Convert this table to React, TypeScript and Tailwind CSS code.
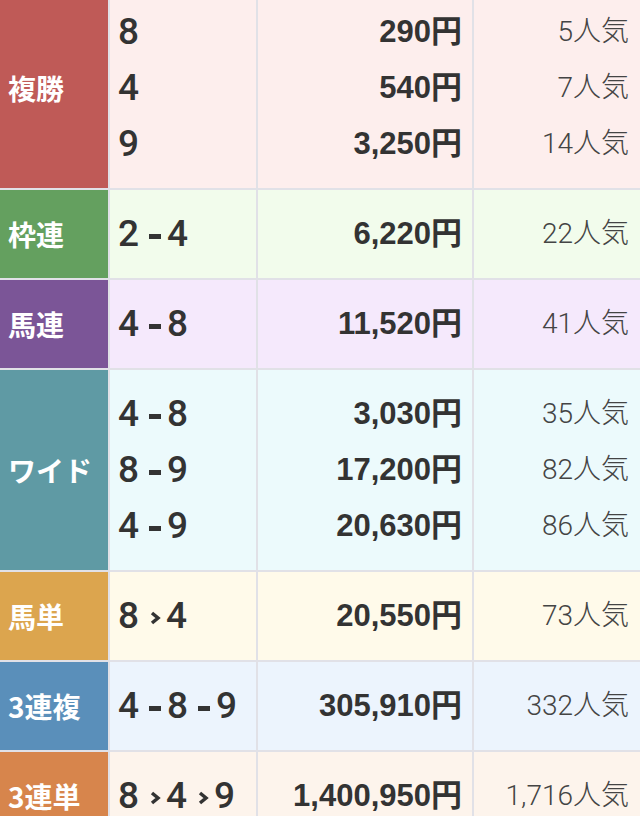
import React from "react";

interface PayoutLine {
  combo: string[];
  sep: "-" | ">";
  amount: string;
  rank: string;
}

interface BetRow {
  label: string;
  labelBg: string;
  rowBg: string;
  lines: PayoutLine[];
}

const rows: BetRow[] = [
  {
    label: "複勝",
    labelBg: "bg-[#bf5a57]",
    rowBg: "bg-[#fdeeed]",
    lines: [
      { combo: ["8"], sep: "-", amount: "290", rank: "5" },
      { combo: ["4"], sep: "-", amount: "540", rank: "7" },
      { combo: ["9"], sep: "-", amount: "3,250", rank: "14" },
    ],
  },
  {
    label: "枠連",
    labelBg: "bg-[#64a05f]",
    rowBg: "bg-[#f2fcec]",
    lines: [{ combo: ["2", "4"], sep: "-", amount: "6,220", rank: "22" }],
  },
  {
    label: "馬連",
    labelBg: "bg-[#7b5597]",
    rowBg: "bg-[#f5e9fc]",
    lines: [{ combo: ["4", "8"], sep: "-", amount: "11,520", rank: "41" }],
  },
  {
    label: "ワイド",
    labelBg: "bg-[#5f9aa4]",
    rowBg: "bg-[#ecfafc]",
    lines: [
      { combo: ["4", "8"], sep: "-", amount: "3,030", rank: "35" },
      { combo: ["8", "9"], sep: "-", amount: "17,200", rank: "82" },
      { combo: ["4", "9"], sep: "-", amount: "20,630", rank: "86" },
    ],
  },
  {
    label: "馬単",
    labelBg: "bg-[#dca54e]",
    rowBg: "bg-[#fffaea]",
    lines: [{ combo: ["8", "4"], sep: ">", amount: "20,550", rank: "73" }],
  },
  {
    label: "3連複",
    labelBg: "bg-[#5a8fba]",
    rowBg: "bg-[#ecf4fd]",
    lines: [{ combo: ["4", "8", "9"], sep: "-", amount: "305,910", rank: "332" }],
  },
  {
    label: "3連単",
    labelBg: "bg-[#d7854c]",
    rowBg: "bg-[#fdf4ec]",
    lines: [{ combo: ["8", "4", "9"], sep: ">", amount: "1,400,950", rank: "1,716" }],
  },
];

// horse numbers joined by a dash (unordered) or a chevron (ordered)
const Combo: React.FC<{ combo: string[]; sep: "-" | ">" }> = ({ combo, sep }) => (
  <span className="flex items-center">
    {combo.map((n, i) => (
      <React.Fragment key={i}>
        {i > 0 &&
          (sep === "-" ? (
            <span className="mt-[5px] ml-[10px] mr-[6px] inline-block h-[5px] w-[12px] bg-[#333]" />
          ) : (
            <svg width="12" height="14" viewBox="0 0 12 14" className="mt-[3px] ml-[10px] mr-[5px]">
              <path d="M3 2 L9 7 L3 12" fill="none" stroke="#333" strokeWidth="3.5" />
            </svg>
          ))}
        <span>{n}</span>
      </React.Fragment>
    ))}
  </span>
);

export default function App() {
  return (
    <div className="h-[816px] w-[640px] overflow-hidden bg-white font-['Liberation_Sans','Noto_Sans_CJK_JP',sans-serif]">
      <div className="-mt-[12px] flex flex-col gap-[2px] bg-[#e1e1e7]">
        {rows.map((row) => (
          <div
            key={row.label}
            className="grid grid-cols-[108px_146px_214px_166px] gap-[2px]"
          >
            <div
              className={`${row.labelBg} flex items-center pl-[8px] font-['Noto_Sans_CJK_JP',sans-serif] text-[28px] font-bold text-white`}
            >
              {row.label}
            </div>
            <div className={`${row.rowBg} flex flex-col py-4 pl-[8px]`}>
              {row.lines.map((l, i) => (
                <div
                  key={i}
                  className="flex h-[56px] items-center font-['Roboto',sans-serif] text-[37px] font-medium text-[#333]"
                >
                  <Combo combo={l.combo} sep={l.sep} />
                </div>
              ))}
            </div>
            <div className={`${row.rowBg} flex flex-col items-end py-4 pr-[10px]`}>
              {row.lines.map((l, i) => (
                <div
                  key={i}
                  className="flex h-[56px] items-center text-[31px] font-bold text-[#333]"
                >
                  {l.amount}円
                </div>
              ))}
            </div>
            <div className={`${row.rowBg} flex flex-col items-end py-4 pr-[11px]`}>
              {row.lines.map((l, i) => (
                <div
                  key={i}
                  className="flex h-[56px] items-center font-['Roboto','Noto_Sans_CJK_JP',sans-serif] text-[28px] font-light text-[#444]"
                >
                  {l.rank}人気
                </div>
              ))}
            </div>
          </div>
        ))}
      </div>
    </div>
  );
}
